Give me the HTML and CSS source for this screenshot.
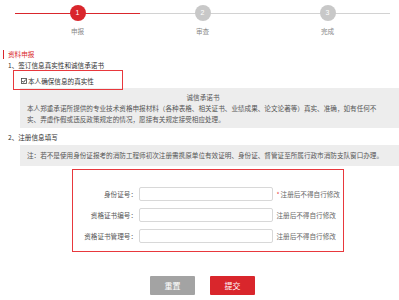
FILE: index.html
```html
<!DOCTYPE html>
<html lang="zh-CN">
<head>
    <meta charset="UTF-8">
    <meta name="viewport" content="width=device-width, initial-scale=1.0">
    <title>资料申报</title>
    <link rel="stylesheet" href="styles.css">
</head>
<body>
    <!-- Steps -->
    <div class="steps">
        <div class="step active">
            <span class="step-num">1</span>
            <span class="step-name">申报</span>
        </div>
        <div class="step">
            <span class="step-num">2</span>
            <span class="step-name">审查</span>
        </div>
        <div class="step">
            <span class="step-num">3</span>
            <span class="step-name">完成</span>
        </div>
    </div>

    <h2 class="section-title">资料申报</h2>

    <p class="sub-title">1、签订信息真实性和诚信承诺书</p>
    <label class="agree">
        <svg class="check" width="6" height="6" viewBox="0 0 6 6">
            <rect x="0.5" y="0.5" width="5" height="5" fill="#fff" stroke="#444" stroke-width="0.8"/>
            <path d="M1.3 3 L2.5 4.3 L4.8 1.5" fill="none" stroke="#222" stroke-width="0.9"/>
        </svg>本人确保信息的真实性
        <span class="mark mark-agree"></span>
    </label>
    <div class="promise">
        <h3>诚信承诺书</h3>
        <p>本人郑重承诺所提供的专业技术资格申报材料（各种表格、相关证书、业绩成果、论文论著等）真实、准确，如有任何不实、弄虚作假或违反政策规定的情况，愿接有关规定接受相应处理。</p>
    </div>

    <p class="sub-title sub-second">2、注册信息填写</p>
    <div class="note">注：若不是使用身份证报考的消防工程师初次注册需携原单位有效证明、身份证、督管证至所属行政市消防支队窗口办理。</div>

    <form class="reg-form">
        <div class="row">
            <label>身份证号：</label>
            <input type="text">
            <span class="hint"><i>*</i>注册后不得自行修改</span>
        </div>
        <div class="row">
            <label>资格证书编号：</label>
            <input type="text">
            <span class="hint">注册后不得自行修改</span>
        </div>
        <div class="row">
            <label>资格证书管理号：</label>
            <input type="text">
            <span class="hint">注册后不得自行修改</span>
        </div>
    </form>

    <div class="actions">
        <button class="btn-reset" type="button">重置</button>
        <button class="btn-submit" type="button">提交</button>
    </div>
</body>
</html>
```

FILE: styles.css
```css
body {
    margin: 0;
    font-family: "Noto Sans CJK SC", "DejaVu Sans", sans-serif;
    font-size: 6.6px;
    color: #555;
    background: #fff;
    overflow: hidden;
}
.steps {
    display: flex;
    margin: 0 9px 0 15px;
    padding-top: 5px;
}
.step {
    flex: 1;
    position: relative;
    display: flex;
    flex-direction: column;
    align-items: center;
}
.step::before {
    content: "";
    position: absolute;
    left: 0;
    right: 0;
    top: 7.5px;
    height: 1.5px;
    background: #d2d2d2;
}
.step.active::before {
    background: #d9262c;
}
.step-num {
    position: relative;
    width: 16px;
    height: 16px;
    line-height: 16px;
    border-radius: 50%;
    background: #c8c8c8;
    color: #fff;
    text-align: center;
    font-size: 7px;
    font-family: "Liberation Sans", sans-serif;
}
.step.active .step-num {
    background: #d9262c;
}
.step-name {
    margin-top: 6px;
    line-height: 8px;
    color: #888;
}
.section-title {
    margin: 14.5px 0 0 3px;
    padding-left: 4px;
    border-left: 1.5px solid #d9262c;
    font-size: 6.6px;
    font-weight: normal;
    line-height: 9px;
    color: #d9262c;
}
.sub-title {
    margin: 1.5px 0 0 8px;
    line-height: 10px;
    color: #333;
}
.agree {
    position: relative;
    display: block;
    margin: 5.5px 0 0 21px;
    line-height: 11px;
    color: #333;
}
.check {
    vertical-align: -0.5px;
    margin-right: 1px;
}
.mark {
    position: absolute;
    border: 1.5px solid #e8383d;
    z-index: 2;
}
.mark-agree {
    left: -8px;
    top: -5.5px;
    width: 108px;
    height: 18px;
}
.promise {
    margin: 1.5px 0 0 20px;
    padding: 4px 20px 3px 7px;
    background: #ededed;
}
.promise h3 {
    margin: 0;
    font-size: 6.6px;
    font-weight: normal;
    line-height: 10px;
    text-align: center;
    color: #555;
}
.promise p {
    margin: 1px 0 0;
    line-height: 11px;
}
.sub-second {
    margin-top: 4px;
}
.note {
    margin: 3px 0 0 20px;
    padding: 5px 0 5px 7px;
    background: #ededed;
    line-height: 11px;
    white-space: nowrap;
}
.reg-form {
    width: 272px;
    margin: 3px 0 0 72px;
    padding: 16.5px 0 8px;
    border: 1.5px solid #e8383d;
    box-sizing: border-box;
}
.row {
    display: flex;
    align-items: center;
    height: 14px;
    margin-bottom: 7px;
}
.row:last-child {
    margin-bottom: 0;
}
.row label {
    width: 64px;
    text-align: right;
    color: #555;
}
.row input {
    width: 134px;
    height: 14px;
    margin: 0 0 0 1.5px;
    padding: 0;
    border: 1px solid #d8d8d8;
    border-radius: 2px;
    box-sizing: border-box;
}
.hint {
    margin-left: 4px;
    color: #666;
    white-space: nowrap;
}
.hint i {
    font-style: normal;
    color: #e8383d;
    margin-right: 1px;
}
.actions {
    display: flex;
    justify-content: center;
    gap: 15px;
    margin: 24px 0 0 6px;
}
.actions button {
    width: 45px;
    height: 19px;
    border: none;
    border-radius: 1px;
    color: #fff;
    font-family: "Noto Sans CJK SC", sans-serif;
    font-size: 8px;
    cursor: pointer;
}
.btn-reset {
    background: #a3a3a3;
}
.btn-submit {
    background: #d9262c;
}
```
